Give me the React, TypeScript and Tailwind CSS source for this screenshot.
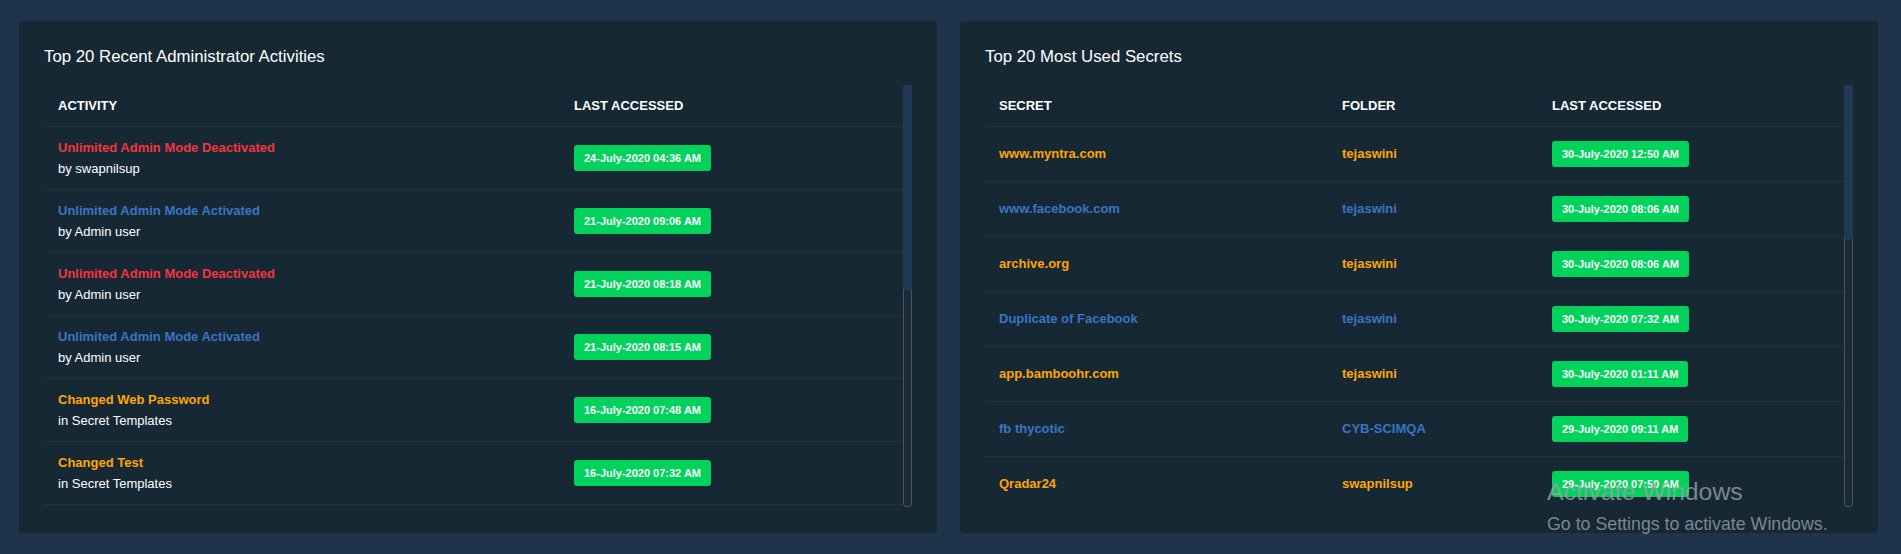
import React from "react";

type Tone = "red" | "blue" | "orange";

type Activity = {
  title: string;
  sub: string;
  when: string;
  tone: Tone;
};

type Secret = {
  name: string;
  folder: string;
  when: string;
  tone: Tone;
};

const toneClass: Record<Tone, string> = {
  red: "text-[#f2353f]",
  blue: "text-[#3a74c4]",
  orange: "text-[#ffa600]",
};

const activities: Activity[] = [
  { title: "Unlimited Admin Mode Deactivated", sub: "by swapnilsup", when: "24-July-2020 04:36 AM", tone: "red" },
  { title: "Unlimited Admin Mode Activated", sub: "by Admin user", when: "21-July-2020 09:06 AM", tone: "blue" },
  { title: "Unlimited Admin Mode Deactivated", sub: "by Admin user", when: "21-July-2020 08:18 AM", tone: "red" },
  { title: "Unlimited Admin Mode Activated", sub: "by Admin user", when: "21-July-2020 08:15 AM", tone: "blue" },
  { title: "Changed Web Password", sub: "in Secret Templates", when: "16-July-2020 07:48 AM", tone: "orange" },
  { title: "Changed Test", sub: "in Secret Templates", when: "16-July-2020 07:32 AM", tone: "orange" },
];

const secrets: Secret[] = [
  { name: "www.myntra.com", folder: "tejaswini", when: "30-July-2020 12:50 AM", tone: "orange" },
  { name: "www.facebook.com", folder: "tejaswini", when: "30-July-2020 08:06 AM", tone: "blue" },
  { name: "archive.org", folder: "tejaswini", when: "30-July-2020 08:06 AM", tone: "orange" },
  { name: "Duplicate of Facebook", folder: "tejaswini", when: "30-July-2020 07:32 AM", tone: "blue" },
  { name: "app.bamboohr.com", folder: "tejaswini", when: "30-July-2020 01:11 AM", tone: "orange" },
  { name: "fb thycotic", folder: "CYB-SCIMQA", when: "29-July-2020 09:11 AM", tone: "blue" },
  { name: "Qradar24", folder: "swapnilsup", when: "29-July-2020 07:50 AM", tone: "orange" },
];

function Badge({ text }: { text: string }) {
  return (
    <span className="inline-flex h-[26px] items-center rounded-[3px] bg-[#00d25b] px-[10px] text-[11px] font-bold text-white">
      {text}
    </span>
  );
}

// scroll bar drawn by hand, the headless browser hides the native one
function ScrollBar({ thumb }: { thumb: string }) {
  return (
    <div className="flex h-full w-[9px] shrink-0 flex-col rounded-[4px] bg-[#1b2a34] shadow-[inset_0_0_0_1px_#4a565f]">
      <div className={`${thumb} rounded-[4px] bg-[#203956]`} />
    </div>
  );
}

function Card({
  title,
  thumb,
  children,
}: {
  title: string;
  thumb: string;
  children: React.ReactNode;
}) {
  return (
    <div className="h-[512px] w-[918px] rounded-[4px] bg-[#162834] px-[25px] pt-[26px]">
      <h4 className="mb-[18px] text-[16.8px] leading-[20px] font-normal text-white">{title}</h4>
      <div className="flex h-[422px]">
        <div className="h-full flex-1 overflow-hidden">{children}</div>
        <ScrollBar thumb={thumb} />
      </div>
    </div>
  );
}

export default function App() {
  return (
    <div
      className="relative flex h-screen gap-[23px] bg-[#1f344b] pt-[21px] pr-[23px] pl-[19px]"
      style={{ fontFamily: '"Liberation Sans", Arial, sans-serif' }}
    >
      <Card title="Top 20 Recent Administrator Activities" thumb="h-[206px]">
        <div className="flex h-[42px] items-center border-b border-[#2c2e33] text-[13px] font-bold text-white">
          <div className="w-[516px] pl-[14px]">ACTIVITY</div>
          <div className="flex-1 pl-[14px]">LAST ACCESSED</div>
        </div>
        {activities.map((a, i) => (
          <div key={i} className="flex h-[63px] items-center border-b border-[#2c2e33] text-[13px] leading-[21px]">
            <div className="w-[516px] pl-[14px]">
              <div className={`font-bold ${toneClass[a.tone]}`}>{a.title}</div>
              <div className="text-white">{a.sub}</div>
            </div>
            <div className="flex-1 pl-[14px]">
              <Badge text={a.when} />
            </div>
          </div>
        ))}
      </Card>

      <Card title="Top 20 Most Used Secrets" thumb="h-[155px]">
        <div className="flex h-[42px] items-center border-b border-[#2c2e33] text-[13px] font-bold text-white">
          <div className="w-[343px] pl-[14px]">SECRET</div>
          <div className="w-[210px] pl-[14px]">FOLDER</div>
          <div className="flex-1 pl-[14px]">LAST ACCESSED</div>
        </div>
        {secrets.map((s, i) => (
          <div key={i} className="flex h-[55px] items-center border-b border-[#2c2e33] text-[13px] font-bold">
            <div className={`w-[343px] pl-[14px] ${toneClass[s.tone]}`}>{s.name}</div>
            <div className={`w-[210px] pl-[14px] ${toneClass[s.tone]}`}>{s.folder}</div>
            <div className="flex-1 pl-[14px]">
              <Badge text={s.when} />
            </div>
          </div>
        ))}
      </Card>

      {/* windows activation watermark sits over the page */}
      <div className="pointer-events-none absolute top-[477px] left-[1547px] text-[#9aa1a8]/80">
        <div className="text-[24.8px] leading-[30px]">Activate Windows</div>
        <div className="mt-[6px] text-[17.8px] leading-[22px]">Go to Settings to activate Windows.</div>
      </div>
    </div>
  );
}
